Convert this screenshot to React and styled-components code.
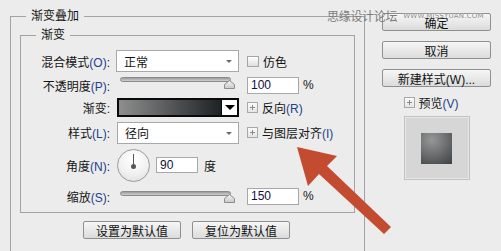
import React from 'react';
import styled, { createGlobalStyle } from 'styled-components';

const GlobalStyle = createGlobalStyle`
  html, body {
    margin: 0;
    padding: 0;
    background: #ececec;
  }
  body {
    font-family: "Liberation Sans", "Noto Sans CJK SC", sans-serif;
    font-size: 12px;
    color: #141414;
  }
`;

const Window = styled.div`
  position: relative;
  width: 501px;
  height: 251px;
  overflow: hidden;
  display: flex;
  align-items: flex-start;
  background: #ececec;
`;

const Group = styled.fieldset`
  box-sizing: border-box;
  min-width: 0;
  margin: ${p => p.$margin};
  padding: ${p => p.$padding};
  width: ${p => p.$width || 'auto'};
  height: ${p => p.$height || 'auto'};
  border: 1px solid #a3a3a3;
`;

const Legend = styled.legend`
  margin-left: 15px;
  padding: 0 5px;
  line-height: 16px;
  font-size: 12px;
`;

const Row = styled.div`
  display: grid;
  grid-template-columns: 95px 123px auto;
  align-items: center;
  height: ${p => p.$h}px;
`;

const Label = styled.span`
  text-align: right;
  padding-right: 6px;
  white-space: nowrap;
`;

const Key = styled.span`
  color: #23418c;
`;

const Extra = styled.div`
  display: flex;
  align-items: center;
  gap: 4px;
  margin-left: 8px;
  white-space: nowrap;
`;

const Select = styled.div`
  position: relative;
  box-sizing: border-box;
  height: 22px;
  margin-left: ${p => p.$ml || 0}px;
  padding-left: 7px;
  display: flex;
  align-items: center;
  background: #fff;
  border: 1px solid #a8a8a8;
  &::after {
    content: '';
    position: absolute;
    right: 6px;
    top: 9px;
    border-left: 3px solid transparent;
    border-right: 3px solid transparent;
    border-top: 3px solid #6d6d6d;
  }
`;

const Check = styled.span`
  box-sizing: border-box;
  width: 12px;
  height: 11px;
  border: 1px solid #a5a5a5;
  background: linear-gradient(#ffffff, #dedede);
`;

const PlusBox = styled.span`
  position: relative;
  flex: none;
  box-sizing: border-box;
  width: 11px;
  height: 11px;
  border: 1px solid #a9a9a9;
  background: linear-gradient(#fbfbfb, #e4e4e4);
  &::before, &::after {
    content: '';
    position: absolute;
    background: #8a8a8a;
  }
  &::before { left: 2px; top: 4px; width: 5px; height: 1px; }
  &::after { left: 4px; top: 2px; width: 1px; height: 5px; }
`;

const NumBox = styled.span`
  box-sizing: border-box;
  width: ${p => p.$w}px;
  height: ${p => p.$h || 17}px;
  padding-left: 3px;
  display: flex;
  align-items: center;
  background: #fff;
  border: 1px solid #a8a8a8;
  color: #101040;
`;

const Slider = styled.div`
  position: relative;
  height: 20px;
  margin: 0 6px 0 4px;
`;

const Track = styled.div`
  position: absolute;
  left: 0;
  right: 2px;
  top: ${p => p.$top}px;
  height: 3px;
  border: 1px solid #8a8a8a;
  border-radius: 3px;
  background: linear-gradient(#9b9b9b, #d0d0d0);
`;

const Thumb = styled.svg`
  position: absolute;
  right: -2px;
  top: ${p => p.$top}px;
`;

const GradientBar = styled.div`
  box-sizing: border-box;
  height: 19px;
  margin-left: 1px;
  display: flex;
  border: 2px solid #0a0a0a;
  background: #0a0a0a;
`;

const Ramp = styled.div`
  flex: 1;
  background: linear-gradient(to right, #8e8e8e, #1d2225);
`;

const RampArrow = styled.div`
  width: 15px;
  margin-left: 1px;
  background: #fff;
  display: flex;
  align-items: center;
  justify-content: center;
  &::after {
    content: '';
    border-left: 5px solid transparent;
    border-right: 5px solid transparent;
    border-top: 5px solid #000;
  }
`;

const AngleRow = styled.div`
  display: flex;
  align-items: center;
  margin-left: 1px;
  gap: 6px;
`;

const Dial = styled.div`
  position: relative;
  box-sizing: border-box;
  width: 33px;
  height: 33px;
  border-radius: 50%;
  border: 1px solid #9a9a9a;
  background: radial-gradient(circle at 50% 30%, #ffffff 0%, #f1f1f1 55%, #dadada 100%);
  &::before {
    content: '';
    position: absolute;
    left: 15px;
    top: 4px;
    width: 1px;
    height: 12px;
    background: #555;
  }
  &::after {
    content: '';
    position: absolute;
    left: 13px;
    top: 14px;
    width: 5px;
    height: 5px;
    border-radius: 50%;
    background: #555;
  }
`;

const ButtonRow = styled.div`
  display: flex;
  justify-content: center;
  gap: 11px;
  margin-top: 8px;
  padding-right: 2px;
`;

const Button = styled.div`
  box-sizing: border-box;
  width: ${p => p.$w}px;
  height: 18px;
  display: flex;
  align-items: center;
  justify-content: center;
  border: 1px solid #8f8f8f;
  border-radius: 2px;
  background: linear-gradient(#f6f6f6, #dcdcdc);
  color: #111;
  white-space: nowrap;
`;

const Side = styled.div`
  display: flex;
  flex-direction: column;
  width: 109px;
  margin: 13px 0 0 17px;
  gap: 10px;
`;

const PreviewToggle = styled.div`
  display: flex;
  align-items: center;
  gap: 4px;
  width: 66px;
  align-self: center;
  margin-top: -2px;
  height: 14px;
  white-space: nowrap;
`;

const PreviewBox = styled.div`
  box-sizing: border-box;
  align-self: center;
  width: 66px;
  height: 64px;
  margin-top: -3px;
  display: flex;
  align-items: center;
  justify-content: center;
  border: 1px solid #c2c2c2;
  box-shadow: inset 0 0 0 1px #e6e6e6;
  background: #d6d6d6;
`;

const Swatch = styled.div`
  width: 31px;
  height: 31px;
  background: radial-gradient(circle at 35% 22%, #979797 0%, #6f7172 45%, #3c4143 100%);
`;

const Watermark = styled.div`
  position: absolute;
  top: 7px;
  left: 327px;
  display: flex;
  align-items: center;
  gap: 6px;
  color: #7c7c7c;
  pointer-events: none;
`;

const WmTitle = styled.span`
  font-size: 12px;
  letter-spacing: -0.3px;
`;

const WmUrl = styled.span`
  font-family: "DejaVu Sans", sans-serif;
  font-size: 7px;
  letter-spacing: 0.2px;
  color: #8a8a8a;
  text-shadow: 0 0 1px #fff;
`;

const Arrow = styled.svg`
  position: absolute;
  left: 0;
  top: 0;
  pointer-events: none;
`;

const SliderControl = ({ trackTop, thumbTop }) => (
  <Slider>
    <Track $top={trackTop} />
    <Thumb $top={thumbTop} width="11" height="9" viewBox="0 0 11 9">
      <defs>
        <linearGradient id="thumbFill" x1="0" y1="0" x2="0" y2="1">
          <stop offset="0" stopColor="#f4f4f4" />
          <stop offset="1" stopColor="#c9c9c9" />
        </linearGradient>
      </defs>
      <path d="M5.5 0.5 L10.5 4.5 L10.5 8.5 L0.5 8.5 L0.5 4.5 Z" fill="url(#thumbFill)" stroke="#8c8c8c" />
    </Thumb>
  </Slider>
);

const App = () => (
  <Window>
    <GlobalStyle />
    <Group $margin="8px 0 0 10px" $padding="0" $width="355px" $height="270px">
      <Legend>渐变叠加</Legend>
      <Group $margin="3px 9px 0 9px" $padding="6px 0 3px 0">
        <Legend>渐变</Legend>
        <Row $h={24}>
          <Label>混合模式<Key>(O)</Key>:</Label>
          <Select>正常</Select>
          <Extra><Check /><span>仿色</span></Extra>
        </Row>
        <Row $h={24}>
          <Label>不透明度<Key>(P)</Key>:</Label>
          <SliderControl trackTop={2} thumbTop={5} />
          <Extra><NumBox $w={52}>100</NumBox><span>%</span></Extra>
        </Row>
        <Row $h={21}>
          <Label>渐变:</Label>
          <GradientBar><Ramp /><RampArrow /></GradientBar>
          <Extra><PlusBox /><span>反向<Key>(R)</Key></span></Extra>
        </Row>
        <Row $h={29}>
          <Label>样式<Key>(L)</Key>:</Label>
          <Select $ml={1}>径向</Select>
          <Extra><PlusBox /><span>与图层对齐<Key>(I)</Key></span></Extra>
        </Row>
        <Row $h={36}>
          <Label>角度<Key>(N)</Key>:</Label>
          <AngleRow>
            <Dial />
            <NumBox $w={42} $h={16}>90</NumBox>
            <span>度</span>
          </AngleRow>
        </Row>
        <Row $h={26}>
          <Label>缩放<Key>(S)</Key>:</Label>
          <SliderControl trackTop={5} thumbTop={8} />
          <Extra><NumBox $w={52}>150</NumBox><span>%</span></Extra>
        </Row>
      </Group>
      <ButtonRow>
        <Button $w={98}>设置为默认值</Button>
        <Button $w={98}>复位为默认值</Button>
      </ButtonRow>
    </Group>
    <Side>
      <Button $w={109}>确定</Button>
      <Button $w={109}>取消</Button>
      <Button $w={109}>新建样式(W)...</Button>
      <PreviewToggle><PlusBox /><span>预览<Key>(V)</Key></span></PreviewToggle>
      <PreviewBox><Swatch /></PreviewBox>
    </Side>
    <Watermark>
      <WmTitle>思缘设计论坛</WmTitle>
      <WmUrl>WWW.MISSYUAN.COM</WmUrl>
    </Watermark>
    <Arrow width="501" height="251" viewBox="0 0 501 251">
      <path
        d="M297 147 L337 156 L327 166 L391 227 L384 234 L319 174 L308 186 Z"
        fill="#c34b2f"
      />
    </Arrow>
  </Window>
);

export default App;
